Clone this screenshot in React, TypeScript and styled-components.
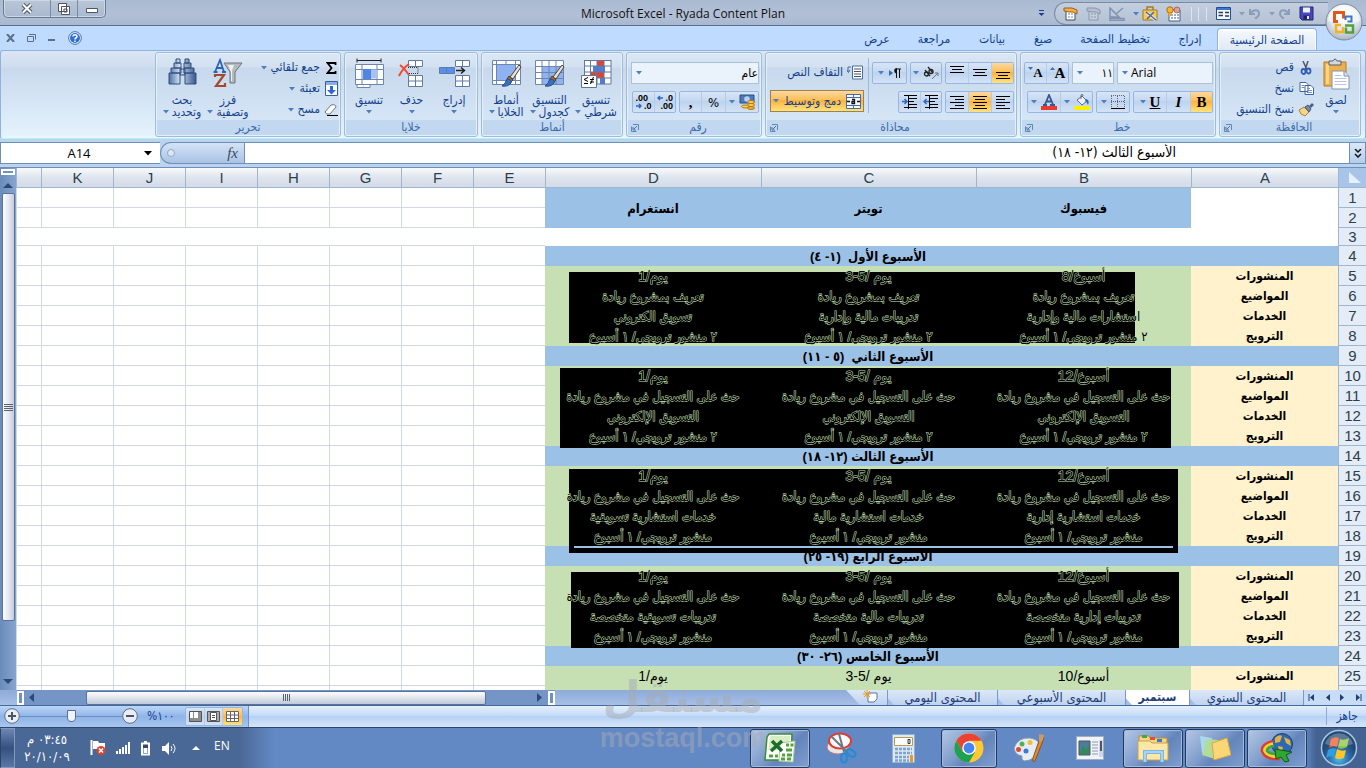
import React from "react";
import styled, { createGlobalStyle, css } from "styled-components";

const GlobalStyle = createGlobalStyle`
  * { box-sizing: border-box; }
  html, body { margin: 0; padding: 0; height: 100%; }
  body { overflow: hidden; background: #bfdbff; font-family: "Liberation Sans", "DejaVu Sans Condensed", "DejaVu Sans", sans-serif; }
  button, input, select { font: inherit; color: inherit; margin: 0; padding: 0; border: 0; background: none; border-radius: 0; }
  svg { display: block; flex: none; direction: ltr; }
`;

const uiFont = css`
  font-family: "DejaVu Sans Condensed", "DejaVu Sans", sans-serif;
  font-size: 11px;
  line-height: 13px;
`;

/* ---------- Window frame ---------- */

const Window = styled.div`
  position: relative;
  display: flex;
  flex-direction: column;
  height: 100vh;
  min-height: 480px;
  overflow: hidden;
  ${uiFont}
  color: #15428b;
`;

const TitleBar = styled.header`
  position: relative;
  flex: none;
  display: flex;
  align-items: flex-start;
  height: 26px;
  padding: 0 38px 0 3px;
  background: linear-gradient(#a9bbd2, #b2c0d6 60%, #a8b8d0);
  border-bottom: 1px solid #5d7183;
`;

const QuickAccess = styled.div`
  display: flex;
  align-items: center;
  gap: 8px;
  height: 23px;
  margin-top: 2px;
  padding: 0 14px 0 8px;
  border: 1px solid #7c8ba2;
  border-inline-start: 0;
  border-radius: 12px 0 0 12px;
  background: linear-gradient(#c3cfdf, #b4c2d5);
`;

const PlainButton = styled.button`
  display: flex;
  align-items: center;
  justify-content: center;
  gap: 3px;
  cursor: default;
`;

const Title = styled.h1`
  position: absolute;
  inset: 0;
  margin: 0;
  text-align: center;
  font: 12px/27px "Open Sans", "Noto Sans", sans-serif;
  color: #111;
  pointer-events: none;
`;

const Spacer = styled.div`
  flex: 1;
`;

const WindowButtons = styled.div`
  display: flex;
  height: 18px;
  direction: ltr;
  border: 1px solid #6b7a90;
  border-top: 0;
  border-radius: 0 0 5px 5px;
  background: linear-gradient(#b9c6d8, #a9b9cf);
  box-shadow: inset 0 0 0 1px #cdd8e6;
`;

const WindowButton = styled(PlainButton)<{ $w: number }>`
  width: ${(p) => p.$w}px;
  border-right: 1px solid #7c8ba2;
  &:last-child { border-right: 0; }
`;

const OfficeButton = styled.button`
  position: absolute;
  top: 3px;
  right: 3px;
  z-index: 3;
  width: 38px;
  height: 38px;
`;

/* ---------- Ribbon tabs ---------- */

const TabRow = styled.nav`
  flex: none;
  display: flex;
  align-items: flex-end;
  height: 24px;
  padding: 0 49px 0 6px;
  background: #bfdbff;
`;

const Tab = styled.button<{ $active?: boolean; $w: number }>`
  width: ${(p) => p.$w}px;
  height: 22px;
  font-size: 12px;
  line-height: 20px;
  color: #15428b;
  ${(p) =>
    p.$active &&
    css`
      border: 1px solid #8db2e3;
      border-bottom: 0;
      border-radius: 4px 4px 0 0;
      background: linear-gradient(#f5f9fe, #dfe9f5);
      box-shadow: inset 0 1px 0 1px #fff;
    `}
`;

const DocumentButtons = styled.div`
  display: flex;
  align-items: center;
  gap: 12px;
  height: 25px;
`;

/* ---------- Ribbon ---------- */

const Ribbon = styled.section`
  flex: none;
  display: flex;
  gap: 3px;
  height: 89px;
  padding: 1px 4px 0;
  border: 1px solid #8db2e3;
  border-bottom-color: #b4f0f0;
  border-radius: 3px;
  background: linear-gradient(#dbe6f4 0, #cfddee 16px, #c9d9ed 17px, #e3f2fc 84px, #e8fbff 100%);
  overflow: hidden;
`;

const GroupBox = styled.fieldset<{ $w: number }>`
  flex: none;
  width: ${(p) => p.$w}px;
  min-width: 0;
  height: 85px;
  margin: 0;
  padding: 0;
  border: 1px solid #9fbbdc;
  border-radius: 3px;
  background: linear-gradient(#dce7f4 0, #d2e0f0 14px, #c8d9ed 15px, #d9e9f9 100%);
  box-shadow: inset 0 0 0 1px #e6f0fa;
`;

const GroupBody = styled.div`
  display: flex;
  justify-content: space-between;
  height: 67px;
  padding: 4px 2px 0 3px;
`;

const GroupFoot = styled.div`
  display: flex;
  align-items: center;
  height: 15px;
  margin: 0 1px 1px;
  padding: 0 3px;
  background: #c1d8f0;
  color: #3e6aaa;
  font-size: 12px;
`;

const GroupName = styled.span`
  flex: 1;
  text-align: center;
`;

const BigButton = styled.button<{ $w?: number }>`
  display: flex;
  flex-direction: column;
  align-items: center;
  flex: none;
  width: ${(p) => p.$w ?? 44}px;
  padding-top: 1px;
  color: #15428b;
`;

const BigIcon = styled.span`
  display: block;
  height: 32px;
`;

const BigLabel = styled.span`
  display: flex;
  flex-direction: column;
  align-items: center;
  margin-top: 4px;
  font-size: 12px;
  line-height: 12px;
  white-space: nowrap;
`;

const LabelLine = styled.span`
  display: flex;
  align-items: center;
  gap: 3px;
  min-height: 12px;
`;

const SmallColumn = styled.div`
  display: flex;
  flex-direction: column;
  align-items: flex-start;
`;

const SmallButton = styled.button`
  display: flex;
  align-items: center;
  gap: 4px;
  height: 21px;
  font-size: 12px;
  color: #15428b;
  white-space: nowrap;
`;

const SmallIcon = styled.span<{ $w: number }>`
  display: flex;
  justify-content: center;
  width: ${(p) => p.$w}px;
`;

const ControlRows = styled.div<{ $w?: number }>`
  flex: ${(p) => (p.$w ? "none" : 1)};
  width: ${(p) => (p.$w ? `${p.$w}px` : "auto")};
  display: flex;
  flex-direction: column;
  gap: 7px;
  padding-top: 5px;
`;

const ControlRow = styled.div`
  display: flex;
  gap: 3px;
  justify-content: flex-start;
`;

const ToolSet = styled.div`
  display: flex;
  height: 22px;
  border: 1px solid #96b6e4;
  border-radius: 2px;
  background: linear-gradient(#d8e5f6, #c4d8f0 45%, #bcd2ee 46%, #d3e3f6);
`;

const Tool = styled.button<{ $w: number; $on?: boolean; $tight?: boolean }>`
  display: flex;
  align-items: center;
  justify-content: center;
  gap: ${(p) => (p.$tight ? 0 : 4)}px;
  width: ${(p) => p.$w}px;
  height: 20px;
  color: #000;
  font-size: 13px;
  border-inline-end: 1px solid #b5cbe9;
  &:last-child { border-inline-end: 0; }
  ${(p) => p.$on && css`background: linear-gradient(#fbd9a0, #fdbf56 45%, #fdb13f 46%, #fde37c);`}
`;

const MergeButton = styled(SmallButton)`
  justify-content: space-between;
  gap: 2px;
  width: 94px;
  height: 22px;
  padding: 0 2px;
  border: 1px solid #a08050;
  background: linear-gradient(#fbd9a0, #fdbf56 45%, #fdb13f 46%, #fde37c);
`;

const Divider = styled.div`
  width: 1px;
  height: 55px;
  margin-top: 1px;
  margin-inline-end: 4px;
  background: #9ab9df;
`;

const PickerBox = styled.div<{ $w: number }>`
  position: relative;
  width: ${(p) => p.$w}px;
  height: 22px;
`;

const PickerArrow = styled.span`
  position: absolute;
  left: 5px;
  top: 9px;
  pointer-events: none;
`;

const Picker = styled.select<{ $ltr?: boolean }>`
  appearance: none;
  width: 100%;
  height: 22px;
  border: 1px solid #abc1de;
  background: #eaf2fb;
  color: #000;
  font: 12px/16px "Open Sans", "DejaVu Sans Condensed", "DejaVu Sans", sans-serif;
  padding: 0 0 0 13px;
  direction: ${(p) => (p.$ltr ? "ltr" : "rtl")};
`;

/* ---------- Formula bar ---------- */

const FormulaBar = styled.div`
  flex: none;
  display: flex;
  height: 28px;
  padding: 3px 0;
  background: #bcd3ef;
`;

const ExpandButton = styled(PlainButton)`
  width: 17px;
  border: 1px solid #6d8fb8;
  background: linear-gradient(#dbe8f8, #b4cdec);
`;

const FormulaInput = styled.input`
  flex: 1;
  min-width: 0;
  padding: 0 173px 2px 8px;
  border: 1px solid #6d8fb8;
  border-inline-start: 0;
  background: #fff;
  color: #000;
  font-size: 14px;
`;

const FxArea = styled.div`
  display: flex;
  align-items: center;
  justify-content: space-between;
  width: 84px;
  padding: 0 6px 0 6px;
  border-block: 1px solid #6d8fb8;
  border-left: 1px solid #6d8fb8;
  border-radius: 11px 0 0 11px;
  background: linear-gradient(#d4e3f6, #a9c3e6);
`;

const FxButton = styled.button`
  font: italic 15px/18px "Liberation Serif", serif;
  color: #3a4a5c;
`;

const NameBox = styled.div`
  display: flex;
  align-items: center;
  width: 160px;
  padding: 0 7px 0 13px;
  border-block: 1px solid #6d8fb8;
  border-left: 1px solid #6d8fb8;
  background: #fff;
`;

const NameInput = styled.input`
  flex: 1;
  min-width: 0;
  text-align: center;
  direction: ltr;
  color: #000;
  font: 13px "Open Sans", "Noto Sans", sans-serif;
`;

/* ---------- Sheet ---------- */

const SheetArea = styled.main`
  flex: 1;
  display: flex;
  min-height: 0;
  background: #fff;
  border-top: 1px solid #6d8fb8;
`;

const SheetView = styled.div`
  position: relative;
  flex: 1;
  min-width: 0;
  overflow: hidden;
`;

const Grid = styled.table`
  width: 100%;
  table-layout: fixed;
  border-collapse: separate;
  border-spacing: 0;
  font: 15px/17px "Liberation Sans", "DejaVu Sans Condensed", "DejaVu Sans", sans-serif;
  color: #000;
`;

const Row = styled.tr<{ $h: number }>`
  height: ${(p) => p.$h}px;
`;

const ColumnHead = styled.th`
  height: 20px;
  padding: 0;
  font-weight: 400;
  color: #2d3f4b;
  border-left: 1px solid #9eb6ce;
  border-bottom: 1px solid #9eb6ce;
  background: linear-gradient(#f8fafc, #dfe5ee 50%, #d3dbe9);
`;

const CornerHead = styled.th`
  padding: 2px;
  border-left: 1px solid #9eb6ce;
  border-bottom: 1px solid #9eb6ce;
  background: #a9c4e9;
`;

const RowHead = styled.th`
  padding: 0;
  overflow: hidden;
  font-weight: 400;
  color: #2d3f4b;
  border-left: 1px solid #9eb6ce;
  border-bottom: 1px solid #9eb6ce;
  background: #e4ecf7;
`;

const fills = {
  none: "#fff",
  blue: "#9bc2e6",
  green: "#c6e0b4",
  yellow: "#fff2cc",
};

const Cell = styled.td<{ $fill: keyof typeof fills; $line?: boolean; $bold?: boolean; $size?: number }>`
  padding: 0;
  overflow: hidden;
  text-align: center;
  white-space: nowrap;
  font-size: ${(p) => p.$size ?? 13}px;
  font-weight: ${(p) => (p.$bold ? 700 : 400)};
  background: ${(p) => fills[p.$fill]};
  border: 0 solid #d0d7e5;
  ${(p) => p.$line && css`border-width: 0 0 1px 1px;`}
`;

/* Text sits above the blocks; its halo has the colour of the cell fill. */
const CellText = styled.span`
  position: relative;
  z-index: 1;
  -webkit-text-stroke: 1px #c6e0b4;
  paint-order: stroke fill;
`;

const Block = styled.div<{ $right: number; $top: number; $w: number; $h: number }>`
  position: absolute;
  right: ${(p) => p.$right}px;
  top: ${(p) => p.$top}px;
  display: flex;
  flex-direction: column;
  justify-content: flex-end;
  width: ${(p) => p.$w}px;
  height: ${(p) => p.$h}px;
  padding: 5px;
  background: #000;
`;

const BlockLine = styled.div`
  height: 2px;
  background: #9bc2e6;
`;

const VScroll = styled.div`
  flex: none;
  display: flex;
  flex-direction: column;
  align-items: center;
  width: 16px;
  padding: 1px 1px 5px;
  background: linear-gradient(90deg, #6a8bbb, #86a4cf);
`;

const SplitBox = styled.div<{ $vertical?: boolean }>`
  flex: none;
  width: ${(p) => (p.$vertical ? 7 : 14)}px;
  height: ${(p) => (p.$vertical ? 14 : 6)}px;
  border: 2px solid #fff;
  background: #7190bf;
`;

const VThumb = styled.div`
  flex: 1;
  display: flex;
  align-items: center;
  justify-content: center;
  width: 13px;
  margin-bottom: 58px;
  border: 1px solid #5a7399;
  border-radius: 2px;
  background: linear-gradient(90deg, #fdfdfe, #dfe5ee 60%, #c2ccdb);
`;

/* ---------- Sheet tabs, status bar ---------- */

const BottomBar = styled.div`
  flex: none;
  display: flex;
  height: 16px;
  background: linear-gradient(#8eabd9, #a5bfe6);
  border-bottom: 1px solid #44699c;
`;

const TabNav = styled.div`
  display: flex;
  align-items: center;
  justify-content: space-around;
  width: 62px;
  background: #c9dcf6;
`;

const SheetTab = styled.button<{ $w: number; $active?: boolean }>`
  width: ${(p) => p.$w}px;
  height: 15px;
  margin-left: -8px;
  padding: 0 0 1px 8px;
  clip-path: polygon(0 0, 100% 0, 100% 100%, 14px 100%);
  background: ${(p) => (p.$active ? "#fff" : "linear-gradient(#dce8f8, #bed3f0)")};
  font-weight: ${(p) => (p.$active ? 700 : 400)};
  font-size: ${(p) => (p.$active ? 12 : 13)}px;
  line-height: 13px;
  color: #1f3e75;
  border-right: 1px solid #7b98c4;
  white-space: nowrap;
`;

const NewSheetTab = styled(SheetTab)`
  display: flex;
  justify-content: center;
`;

const HScroll = styled.div`
  display: flex;
  align-items: center;
  width: 538px;
  padding: 1px 0;
  margin-left: 17px;
  background: #7595c6;
`;

const HThumb = styled.div`
  flex: 1;
  display: flex;
  align-items: center;
  justify-content: center;
  height: 14px;
  margin: 0 46px;
  border: 1px solid #5a7399;
  border-radius: 2px;
  background: linear-gradient(#fdfdfe, #d9dfe9 60%, #bcc8d9);
`;

const StatusBar = styled.footer`
  flex: none;
  display: flex;
  align-items: center;
  height: 22px;
  padding: 0 0 1px 3px;
  background: linear-gradient(#e4effd, #c7dcf8 45%, #b3d0f5 46%, #d5e5fa);
  border-bottom: 1px solid #2f4666;
  color: #15428b;
`;

const StatusText = styled.span`
  width: 40px;
  padding-right: 8px;
  border-left: 1px solid #8caad4;
  font-size: 12px;
  line-height: 18px;
`;

const ZoomArea = styled.div`
  display: flex;
  align-items: center;
  direction: ltr;
  height: 21px;
  background: linear-gradient(#bdd6f8, #8fb4e8 50%, #a7c6f0);
  margin-left: -3px;
  padding-left: 4px;
  border-right: 1px solid #6f93c6;
`;

const ZoomSlider = styled.input`
  appearance: none;
  width: 102px;
  height: 16px;
  background: linear-gradient(#6d8fbf, #6d8fbf) center / 100% 1px no-repeat;
  &::-webkit-slider-thumb {
    appearance: none;
    width: 9px;
    height: 12px;
    border: 1px solid #5d6f88;
    border-radius: 1px 1px 5px 5px;
    background: #eef4fb;
  }
`;

const ZoomLabel = styled.label`
  margin: 0 8px 0 9px;
  width: 30px;
  font-size: 12px;
  white-space: nowrap;
`;

const ViewSet = styled(ToolSet)`
  height: 19px;
  margin-right: 5px;
`;

const ViewTool = styled(Tool)`
  height: 17px;
`;

/* ---------- Taskbar ---------- */

const Taskbar = styled.div`
  flex: none;
  display: flex;
  align-items: center;
  height: 40px;
  padding-right: 6px;
  background: linear-gradient(90deg, #4a6896 0, #4a6896 240px, #6389c5 275px, #6389c5 calc(100% - 62px), #456392 calc(100% - 50px));
`;

const TaskItem = styled.button<{ $w: number; $open?: boolean; $gap?: number }>`
  display: flex;
  align-items: center;
  justify-content: center;
  width: ${(p) => p.$w}px;
  height: 39px;
  margin-left: ${(p) => p.$gap ?? 2}px;
  ${(p) =>
    p.$open &&
    css`
      border: 1px solid #23395e;
      border-radius: 3px;
      background: linear-gradient(135deg, #b5c8e4, #7d9bcb 45%, #6485bb 60%, #7f9fd0);
      box-shadow: inset 0 0 0 1px #a3b9dc;
    `}
`;

const Tray = styled.div`
  display: flex;
  align-items: center;
  direction: ltr;
  height: 40px;
  color: #fff;
`;

const ShowDesktop = styled.button`
  width: 15px;
  height: 40px;
  border: 1px solid #8199c0;
  border-left-color: #2d4368;
  background: linear-gradient(#6d87b3, #35507f 50%, #5877a8);
`;

const Clock = styled.time`
  width: 58px;
  margin-left: 3px;
  text-align: center;
  direction: rtl;
  font-size: 13px;
  line-height: 17px;
`;

const TrayIcons = styled.div`
  display: flex;
  align-items: center;
  gap: 9px;
  margin-left: 14px;
`;

const Language = styled.span`
  margin-left: 10px;
  padding-bottom: 4px;
  font: 12px/16px "Open Sans", "Noto Sans", sans-serif;
`;

const Watermark = styled.div`
  position: absolute;
  left: 599px;
  bottom: 15px;
  z-index: 5;
  display: flex;
  flex-direction: column;
  align-items: center;
  width: 168px;
  color: rgba(165, 170, 180, 0.5);
  font: 700 27px/30px "Liberation Sans", sans-serif;
  pointer-events: none;
`;

const WatermarkName = styled.div`
  font: 700 44px/52px "DejaVu Sans", sans-serif;
`;

/* ---------- Icons ---------- */

const Caret = ({ color = "#4f7fc0" }: { color?: string }) => (
  <svg width="6" height="4"><path d="M0 0h6L3 3.500z" fill={color} /></svg>
);

const Launcher = () => (
  <svg width="8" height="8" viewBox="0 0 8 8"><path d="M2 .5h5.500v5.500" fill="none" stroke="#6387b5" /><path d="M.5 2.500v5h5" fill="none" stroke="#6387b5" /><path d="M6 2 3 5M2 3v3h3" stroke="#4b70a5" fill="none" /></svg>
);

const OfficeLogo = () => (
  <svg width="38" height="38" viewBox="0 0 38 38">
    <defs><radialGradient id="orb" cx=".5" cy=".3" r=".7"><stop offset="0" stopColor="#fff" /><stop offset=".6" stopColor="#dfe5ec" /><stop offset="1" stopColor="#aab5c4" /></radialGradient></defs>
    <circle cx="19" cy="19" r="18" fill="url(#orb)" stroke="#7d8a9c" />
    <path d="M3 18a16 16 0 0 1 32 0q-16 6-32 0z" fill="#fff" opacity=".5" />
    <g fill="none">
      <path d="M13 18.500H9.500v-9h9v6" stroke="#dd5a1b" strokeWidth="3" />
      <path d="M20.500 17v-3.500h6v5h-4" stroke="#3d76c9" strokeWidth="2" />
      <path d="M18 24v5h-7v-7h5" stroke="#f4b223" strokeWidth="2.500" />
      <path d="M20 22.500h8v7h-7v-5" stroke="#53a13c" strokeWidth="2.500" />
    </g>
  </svg>
);

const SaveIcon = () => (
  <svg width="15" height="15" viewBox="0 0 15 15"><path d="M1 1h13v13H3l-2-2z" fill="#4747b8" stroke="#26266e" /><path d="M4 1.500h7v5H4z" fill="#eef0fb" /><path d="M4.500 9.500h6v4h-6z" fill="#23235c" /><path d="M8 10h2v3H8z" fill="#dfe3f5" /></svg>
);
const UndoIcon = ({ flip }: { flip?: boolean }) => (
  <svg width="13" height="12" viewBox="0 0 13 12"><g transform={flip ? "translate(13 0) scale(-1 1)" : undefined}><path d="M11 1v5H6M10.500 5.500C8 1 2 1 2 5.500c0 3 2 4 4 5" fill="none" stroke="#8c9db8" strokeWidth="2" /></g></svg>
);
const FormIcon = () => (
  <svg width="15" height="13" viewBox="0 0 15 13"><path d="M.5.500h14v12H.5z" fill="#f4f8fd" stroke="#1d4d9c" /><path d="M1 1h13v2H1z" fill="#3c77ce" /><path d="M2.500 5.500H7M2.500 8.500H7M9 5.500h4M9 9h4" stroke="#2c3b57" strokeWidth="1.500" /></svg>
);
const TwoPeople = () => (
  <svg width="16" height="16" viewBox="0 0 16 16"><path d="M3 4h11v11H3z" fill="#fff" stroke="#44608d" /><path d="M5 9h8M5 12h8" stroke="#7b93ba" strokeWidth="1.500" strokeDasharray="2 1" /><circle cx="4" cy="4" r="3.200" fill="#f2b636" stroke="#b36b10" /><path d="M2 7h4l-1 3H3z" fill="#f2a426" /><circle cx="11" cy="4" r="3" fill="#d9a09a" stroke="#8c4f4b" strokeWidth=".7" /></svg>
);
const ToolsIcon = () => (
  <svg width="16" height="15" viewBox="0 0 16 15"><path d="M1 4h14v10H1z" fill="#f6c958" stroke="#a67b20" /><path d="M5 4V1h6v3" fill="none" stroke="#a67b20" strokeWidth="1.500" /><path d="m5 7 9 7" stroke="#e8edf5" strokeWidth="3" /><path d="m5 13 7-7M4 6l10 8" stroke="#466a9f" strokeWidth="1.500" /></svg>
);
const DesignIcon = () => (
  <svg width="16" height="14" viewBox="0 0 16 14"><path d="M1 1v9h9zM1 11.500h14v2H1zM7 7l7-6" fill="none" stroke="#8193ae" strokeWidth="1.500" /></svg>
);
const PropsIcon = ({ dim }: { dim?: boolean }) => (
  <svg width="15" height="15" viewBox="0 0 15 15"><path d="M3 4h9v10H3z" fill={dim ? "#c6cfdc" : "#fff"} stroke={dim ? "#8896ac" : "#404c60"} /><path d="M5 8h6M5 11h6" stroke={dim ? "#8896ac" : "#6682ad"} strokeDasharray="2 1" /><path d="M1 2h8l5 2v4l-4-2H6L1 5z" fill={dim ? "#b4bfd0" : "#efb04c"} stroke={dim ? "#8896ac" : "#9b6118"} /></svg>
);
const HelpIcon = () => (
  <svg width="14" height="14" viewBox="0 0 14 14"><circle cx="7" cy="7" r="6.300" fill="#fff" stroke="#3b69b0" /><circle cx="7" cy="7" r="5" fill="#2f6fd0" /><path d="M5 5.500c0-2.500 4-2.500 4 0C9 7 7 6.500 7 8.500M7 9.500v1.500" stroke="#fff" strokeWidth="1.500" fill="none" /></svg>
);

const PasteIcon = () => (
  <svg width="28" height="32" viewBox="0 0 28 32"><path d="M2 4h22v24H2z" fill="#eeb04a" stroke="#b57b22" /><path d="M4 6h3v20H4z" fill="#f9d48b" /><path d="M7 3h4q2-4 4 0h4v4H7z" fill="#d3d7de" stroke="#555f70" /><path d="M10 13h12l5 5v13H10z" fill="#fff" stroke="#8092b3" /><path d="M22 13v5h5" fill="#dce5f2" stroke="#8092b3" /><path d="M12.500 17.500h7M12.500 20.500h12M12.500 23.500h12M12.500 26.500h12" stroke="#b6c6e0" /></svg>
);
const CutIcon = () => (
  <svg width="12" height="14" viewBox="0 0 12 14"><path d="m3 0 4 9M8 0 5 9" stroke="#556" strokeWidth="1.500" /><ellipse cx="3.500" cy="10.500" rx="2" ry="2.500" fill="none" stroke="#2f5fb4" strokeWidth="1.800" /><ellipse cx="8.500" cy="10" rx="2" ry="2.500" fill="none" stroke="#2f5fb4" strokeWidth="1.800" /></svg>
);
const CopyIcon = () => (
  <svg width="15" height="13" viewBox="0 0 15 13"><path d="M1 .5h6l2 2v7H1zM6 3.500h6l2.500 2.500v6.500H6z" fill="#fff" stroke="#3f62a0" /><path d="M2.500 3.500h3M2.500 5.500h3M8 6.500h3M8 8.500h5M8 10.500h5" stroke="#6e92cb" /></svg>
);
const PainterIcon = () => (
  <svg width="16" height="14" viewBox="0 0 16 14"><path d="m1 7 5-3 5 5-4 4q-5-1-6-6z" fill="#f2d48a" stroke="#a98235" /><path d="m7 4 3-2 3 4-2 3z" fill="#7b8aa4" stroke="#495a78" /><path d="m11 3 3-3 2 2-3 3z" fill="#4e5f7e" /></svg>
);

const Glyph = styled.span<{ $italic?: boolean; $under?: boolean; $small?: boolean }>`
  font: 700 15px/18px "Liberation Serif", serif;
  ${(p) => p.$small && css`font-size: 13px;`}
  font-style: ${(p) => (p.$italic ? "italic" : "normal")};
  text-decoration: ${(p) => (p.$under ? "underline" : "none")};
`;
const SizeMark = ({ up }: { up?: boolean }) => (
  <svg width="5" height="12"><path d={up ? "M0 3h5L2.500 0z" : "M0 0h5L2.500 3z"} fill="#3c6fbc" /></svg>
);
const BorderIcon = () => (
  <svg width="14" height="14" viewBox="0 0 14 14" shapeRendering="crispEdges"><path d="M.5 1v12M6.500 1v12M13.500 1v12M0 .5h14M0 6.500h14" stroke="#667" strokeDasharray="1 1" /><path d="M0 13.500h14" stroke="#000" strokeWidth="2" /></svg>
);
const FillIcon = () => (
  <svg width="16" height="16" viewBox="0 0 16 16"><path d="m3 6 5-4 5 5-5 4z" fill="#eef2f8" stroke="#5b6b85" /><path d="M7 5V1q2-2 2 1" fill="none" stroke="#5b6b85" /><path d="M12 5q4 1 2 6-1-3-3-4z" fill="#2d67b9" /><path d="M0 12h16v4H0z" fill="#ffef00" /></svg>
);
const FontColorIcon = () => (
  <svg width="16" height="16" viewBox="0 0 16 16"><path d="M2 11h4M9 11h5M4 10.500 8 1l4 9.500M5.500 7.500h5" stroke="#36598f" strokeWidth="1.800" fill="none" /><path d="M0 12h16v4H0z" fill="#ea3b31" /></svg>
);

const Lines = ({ rows }: { rows: Array<[number, number, number]> }) => (
  <svg width="14" height="14" viewBox="0 0 14 14" shapeRendering="crispEdges">
    {rows.map(([x, y, w]) => <path key={y} d={`M${x} ${y}.5h${w}`} stroke="#000" />)}
  </svg>
);
const WrapIcon = () => (
  <svg width="17" height="15" viewBox="0 0 17 15"><path d="M5.500 1h10v13h-10z" fill="#fff" stroke="#456ca6" /><path d="M7 4h7M7 6.500h7M7 9h7M7 11.500h7" stroke="#456" /><path d="M4 2H1v5M0 5l1.500 2.500L3 5" fill="none" stroke="#456ca6" /></svg>
);
const MergeIcon = () => (
  <svg width="15" height="15" viewBox="0 0 15 15"><path d="M.5.500h14v14H.5zM.5 3.500h14M.5 11.500h14M7.500 0v3.500M7.500 11.500V15" fill="#f4f8fe" stroke="#446aa3" /><path d="M1 7.500h3M11 7.500h3M6 5.500h2.500v4H6v-2h2.500" fill="none" stroke="#111" strokeWidth="1.300" /></svg>
);
const OrientIcon = () => (
  <svg width="16" height="14" viewBox="0 0 16 14"><g fill="none" stroke="#222" strokeWidth="1.300"><path d="m2 4 5 6" /><circle cx="3.500" cy="8" r="2" /><circle cx="8" cy="5.500" r="2" /><path d="m5 1 5 6" /></g><path d="m9 13 6-6M12 7h3v3" stroke="#777" fill="none" /></svg>
);
const DirectionIcon = () => (
  <svg width="13" height="11" viewBox="0 0 13 11"><path d="M1 2v6l4-3z" fill="#3668b8" /><path d="M8.500 10V1M11.500 10V1M13 1H9" stroke="#111" fill="none" /><path d="M9 0a2.500 2.500 0 0 0 0 5.500z" fill="#111" /></svg>
);
const IndentIcon = ({ out }: { out?: boolean }) => (
  <svg width="16" height="14" viewBox="0 0 16 14"><g shapeRendering="crispEdges" stroke="#000"><path d="M2 .5h4M7 .5h8M7 3.500h8M7 6.500h5M7 9.500h8M2 12.500h4M7 12.500h8M6.500 0v14" /></g><path d={out ? "M0 6.500h5M2.500 4l2.500 2.500L2.500 9" : "M6 6.500H1M3.500 4 1 6.500 3.500 9"} stroke="#2f66c1" strokeWidth="1.500" fill="none" /></svg>
);
const MoneyIcon = () => (
  <svg width="17" height="16" viewBox="0 0 17 16"><path d="M1 1h14v8H1z" fill="#4d79bb" stroke="#2b4f88" /><circle cx="8" cy="5" r="2.800" fill="#bcd1ef" /><ellipse cx="12" cy="8" rx="3.500" ry="1.500" fill="#fbcf53" stroke="#b57b13" /><ellipse cx="12" cy="11" rx="3.500" ry="1.500" fill="#fbcf53" stroke="#b57b13" /><ellipse cx="6" cy="12.500" rx="3.500" ry="1.500" fill="#fbcf53" stroke="#b57b13" /><ellipse cx="12" cy="14" rx="3.500" ry="1.500" fill="#f2a93a" stroke="#b57b13" /></svg>
);
const DecimalBox = styled.span`
  display: flex;
  flex-direction: column;
  direction: ltr;
  font: 700 9px/8px "Liberation Sans", sans-serif;
`;
const DecimalLine = styled.span`
  display: flex;
  align-items: center;
  justify-content: space-between;
  width: 16px;
`;
const Arrow = ({ right }: { right?: boolean }) => (
  <svg width="6" height="6"><path d={right ? "M0 3h5M3 1l2 2-2 2" : "M6 3H1M3 1 1 3l2 2"} stroke="#2f66c1" strokeWidth="1.500" fill="none" /></svg>
);

const CondIcon = () => (
  <svg width="31" height="30" viewBox="0 0 31 30"><path d="M3 2h27v24H3z" fill="#fff" /><path d="M16 2h7v6h-7zM10 14h13v6H10z" fill="#e8402a" /><path d="M12 8h12v6H12zM19 20h5v6h-5z" fill="#4e7fd6" /><path d="M3.500 2v24M9.500 2v24M16 2v24M23 2v24M30 2v24M3 2.500h27M3 8h27M3 14h27M3 20h27M3 26h27" stroke="#60789f" fill="none" /><path d="M.5 17.500h15v12H.5z" fill="#fff" stroke="#5e7595" /><path d="M7 19.500 3 21.500l4 2M3 25.500h4M9 21.500h4M9 24h4M12.500 19l-3 7" stroke="#000" fill="none" /></svg>
);
const TableBrush = ({ full }: { full?: boolean }) => (
  <svg width="31" height="30" viewBox="0 0 31 30"><path d="M1 2h28v24H1z" fill="#fff" /><path d={full ? "M5 6h20v16H5z" : "M8 8h21v18H8z"} fill="#8fb2f2" /><path d={full ? "M1.500 2.500h28v24h-28zM5.500 2v24M24.500 2v24M1 6.500h28M1 22.500h28M15 2v4M15 22v4" : "M1.500 2.500h28v24h-28zM8 2v24M15 2v24M22 2v24M1 8.500h28M1 14.500h28M1 20.500h28"} stroke="#6c86ad" fill="none" /><path d="m28 7 2 2-8 12-3-2z" fill="#e7e1d4" stroke="#4b4038" /><path d="m18 18 4 4-2 2-4-3z" fill="#a86c33" stroke="#5e4025" /><path d="M16 21q5 0 4 4-3 4-9 3 4-3 5-7z" fill="#3a72ba" stroke="#254f86" /></svg>
);
const InsertIcon = () => (
  <svg width="31" height="30" viewBox="0 0 31 30" fill="#fff" stroke="#5d7ba8"><path d="M16.500 2.500h14v6h-14zM23.500 2.500v6M16.500 17.500h14v11h-14zM23.500 17.500v11M16.500 23h14" /><path d="M.5 9.500h15v6H.5zM7.500 9.500v6" fill="#5b8ee8" /><path d="M17 12.500h8M22 9.500l3.500 3-3.500 3" fill="none" stroke="#222" strokeWidth="1.500" /></svg>
);
const DeleteIcon = () => (
  <svg width="27" height="30" viewBox="0 0 27 30" fill="#fff" stroke="#5d7ba8"><path d="M10.500 2.500h14v6h-14zM17.500 2.500v6M10.500 17.500h14v11h-14zM17.500 17.500v11M10.500 23h14" /><path d="M10 9.500h10v6H10" fill="none" stroke="#333" strokeDasharray="1 1" /><path d="M2 7q4 3 9 10M11 6Q5 10 1 18" stroke="#ee4b2d" strokeWidth="2" fill="none" /></svg>
);
const FormatIcon = () => (
  <svg width="31" height="31" viewBox="0 0 31 31"><path d="M3 2.500h24M3 .5v4M27 .5v4M8 2.500h14" stroke="#222" fill="none" /><path d="M1 6h28v20H1zM3 27h6v3H3zM10 27h6v3h-6z" fill="#fff" /><path d="M1.500 6.500h28v20h-28zM8 6v20M23 6v20M1 11.500h28M1 21.500h28M3 26.500v3h13v-3" stroke="#6c86ad" fill="none" /><path d="M9 11h8v10H9z" fill="#4e86e6" /><path d="M17 11.500h6v9h-6z" fill="#a7c2f0" /></svg>
);
const SortIcon = () => (
  <svg width="31" height="30" viewBox="0 0 31 30"><path d="M2 14 7 2l4 12M4 10h6M.5 14h4M9 14h4" stroke="#2b63b5" strokeWidth="1.800" fill="none" /><path d="M2 19v-2h9L3 28h9v-3" stroke="#a34a2c" strokeWidth="2.200" fill="none" /><path d="M11 5h18l-7 9v11h-5V14z" fill="#b5babf" stroke="#6d747c" /><path d="M15 7h6l-2 6v10h-1V14z" fill="#eceef0" /></svg>
);
const FindIcon = () => (
  <svg width="29" height="30" viewBox="0 0 29 30"><defs><linearGradient id="bino" x2="1"><stop offset="0" stopColor="#4d6fa6" /><stop offset=".4" stopColor="#d6e1f1" /><stop offset="1" stopColor="#35588f" /></linearGradient></defs><g fill="url(#bino)" stroke="#304e7f"><path d="M8 1h4v4H8zM17 1h4v4h-4zM6 5h7v5H6zM16 5h7v5h-7zM3 10h10v5H3zM16 10h10v5H16zM1 15h11v11H1zM17 15h11v11H17zM12 11h5v6h-5z" /></g></svg>
);
const SumIcon = () => (
  <svg width="11" height="12" viewBox="0 0 11 12"><path d="M9.500 3V1H1.500l4 5-4 5h8V9" fill="none" stroke="#000" strokeWidth="1.800" /></svg>
);
const FillDownIcon = () => (
  <svg width="13" height="15" viewBox="0 0 13 15"><path d="M.5.500h12v14H.5z" fill="#fff" stroke="#39609d" /><path d="M1 1h11v3H1z" fill="#86aee9" /><path d="M5 5h3v4h3l-4.500 4.500L2 9h3z" fill="#2c6ad0" /></svg>
);
const EraserIcon = () => (
  <svg width="14" height="12" viewBox="0 0 14 12"><path d="m1 8 6-7q5-1 5 2l-6 7q-4 1-5-2z" fill="#fdfdfe" stroke="#6a7689" /><path d="M3 11.500h11" stroke="#000" /></svg>
);

const NavIcon = ({ flip, end }: { flip?: boolean; end?: boolean }) => (
  <svg width="7" height="7" viewBox="0 0 7 7"><g transform={flip ? "translate(7 0) scale(-1 1)" : undefined}><path d="M1 0v7l4-3.500z" fill="#1f3e75" />{end && <path d="M6 0v7" stroke="#1f3e75" />}</g></svg>
);
const Grip = ({ turn }: { turn?: boolean }) => (
  <svg width="9" height="9" viewBox="0 0 9 9" shapeRendering="crispEdges"><path d={turn ? "M0 1.500h9M0 3.500h9M0 5.500h9M0 7.500h9" : "M1.500 1v7M3.500 1v7M5.500 1v7M7.500 1v7"} stroke="#5a6270" /></svg>
);
const ZoomIcon = ({ plus }: { plus?: boolean }) => (
  <svg width="16" height="16" viewBox="0 0 16 16"><circle cx="8" cy="8" r="7.300" fill="#e9edf3" stroke="#5f6f86" /><path d={plus ? "M4 8h8M8 4v8" : "M4 8h8"} stroke="#4a5668" strokeWidth="2" /></svg>
);

const StartOrb = () => (
  <svg width="38" height="38" viewBox="0 0 38 38"><defs><radialGradient id="start" cy=".8"><stop offset="0" stopColor="#49c0f0" /><stop offset=".6" stopColor="#2b6aa6" /><stop offset="1" stopColor="#244a78" /></radialGradient></defs><circle cx="19" cy="19" r="17.500" fill="url(#start)" stroke="#a5c4dd" strokeWidth="1.500" /><path d="M11 10q4-3 8-1l-2 9q-4-2-8 1z" fill="#ef5a28" /><path d="M20 10q4 2 9-1l-2 9q-5 3-9 1z" fill="#8bc63e" /><path d="M8 21q4-3 8-1l-2 8q-4-2-8 1z" fill="#2f9ee0" /><path d="M17 20q5 3 9 1l-2 8q-5 2-9 0z" fill="#fcc628" /><path d="M5 15a14.500 14.500 0 0 1 28 0q-14 5-28 0z" fill="#fff" opacity=".25" /></svg>
);
const GlobeIcon = () => (
  <svg width="34" height="30" viewBox="0 0 34 30"><circle cx="22" cy="11" r="10.500" fill="#2e67b4" stroke="#1c3f76" /><path d="M15 5q4-4 7-2l-2 6-5 1zM24 4l6 3 1 6-5-3zM18 13l5 1-1 4-3-1z" fill="#dfb443" /><path d="M13 8Q1 11 2 18q3 9 18 8" fill="none" stroke="#e23b2e" strokeWidth="2.500" /><path d="M13 10.500q-9 2-8.500 7.500 3 6 15 6" fill="none" stroke="#f5d327" strokeWidth="2.500" /><path d="M14 13q-7 1-7 5 3 3 11 3" fill="none" stroke="#3aa83c" strokeWidth="2.500" /><path d="m15 16 17 3-6 3 3 6-4 1-4-5-5 2z" fill="#2ea82e" stroke="#0d5c14" /></svg>
);
const NotesIcon = () => (
  <svg width="32" height="28" viewBox="0 0 32 28"><path d="m1 2 12 2 1 13-11 2z" fill="#a7d8ef" /><path d="m7 5 12 1-3 19-13-4z" fill="#b4dc99" /><path d="m13 9 15-5 4 17-17 5z" fill="#fbd677" stroke="#dba93d" /></svg>
);
const FolderIcon = () => (
  <svg width="32" height="30" viewBox="0 0 32 30"><path d="M2 3h10l1 2h17v20H2z" fill="#f3d681" stroke="#b98f36" /><path d="M5 2h5v3H5z" fill="#4ba348" /><path d="M13 4h5v3h-5z" fill="#df4f3c" /><path d="M20 6h5v3h-5z" fill="#3d7cc9" /><path d="M1 8h12l2 2h16v17H1z" fill="#fbe7a6" stroke="#c9a24c" /><path d="M8 29V19h17v10" fill="none" stroke="#7db8e4" strokeWidth="4" /><path d="M8 29V19h17v10" fill="none" stroke="#b8dcf4" strokeWidth="1.500" /></svg>
);
const ReaderIcon = () => (
  <svg width="28" height="24" viewBox="0 0 28 24"><path d="M.5.500h27v23H.5z" fill="#f0f4f9" stroke="#a2adbd" /><path d="M3 5h11v14H3z" fill="#497f9d" stroke="#555" /><path d="m4 17 3-7 3 4 3-5v9H4z" fill="#328a57" /><path d="M16 6h6M16 9h6M16 12h6M16 15h6M16 18h6" stroke="#8b98aa" /><path d="M23 4h4v17h-4z" fill="#cdd8e6" /><path d="M24 5h2v10h-2z" fill="#4b5868" /></svg>
);
const PaintIcon = () => (
  <svg width="33" height="30" viewBox="0 0 33 30"><path d="M2 15Q6 4 18 5q12 2 9 11-4 12-15 12-3-1-2-5Q3 22 2 15z" fill="#e6ecf4" stroke="#8898b1" /><circle cx="6.500" cy="16.500" r="2.500" fill="#d94a38" /><circle cx="10" cy="11" r="2.500" fill="#5bae4a" /><circle cx="18" cy="9.500" r="2.500" fill="#efc034" /><circle cx="14" cy="18" r="2.500" fill="#3f78ce" /><path d="m29 2 3 3-9 23q-3 2-2-3z" fill="#d98b35" stroke="#8b5319" /><path d="m27 1 5 1-1 5-4 3z" fill="#c89b69" /></svg>
);
const ChromeIcon = () => (
  <svg width="30" height="30" viewBox="0 0 30 30"><circle cx="15" cy="15" r="14.500" fill="#fcc934" /><path d="M2.400 7.700A14.500 14.500 0 0 1 27.600 7.700H15L8.500 18.500z" fill="#ea4335" /><path d="M2.400 7.700A14.500 14.500 0 0 0 15 29.500l6-10.500-12.500-.5z" fill="#1fa153" /><circle cx="15" cy="15" r="6.800" fill="#fff" /><circle cx="15" cy="15" r="5.400" fill="#4285f4" /></svg>
);
const CalcIcon = () => (
  <svg width="23" height="29" viewBox="0 0 23 29"><path d="M.5.500h22v28H.5z" fill="#dce9f6" stroke="#8fb1d2" /><path d="M2.500 3.500h18v8h-18z" fill="#f9fbfd" stroke="#c29a45" /><path d="M16 5.500h2v4h-2z" fill="none" stroke="#333" /><path d="M3 15h17M3 19h17M3 23h14M3 26.500h14" stroke="#7fa3cb" strokeWidth="2.500" strokeDasharray="3 1" /><path d="M18 21h3v7h-3z" fill="#f0952c" /></svg>
);
const SnipIcon = () => (
  <svg width="32" height="32" viewBox="0 0 32 32"><ellipse cx="12" cy="15" rx="11" ry="7" fill="#e9e6e8" stroke="#c7747b" /><ellipse cx="14" cy="9" rx="11" ry="7.500" fill="#fafafa" stroke="#dd3e31" strokeWidth="2" /><path d="m6 5 15 15M13 2l5 18" stroke="#6e7884" strokeWidth="2" /><ellipse cx="25" cy="21" rx="5" ry="3" transform="rotate(35 25 21)" fill="none" stroke="#2b8ad1" strokeWidth="2.500" /><ellipse cx="18" cy="26" rx="3" ry="4.500" fill="none" stroke="#2b8ad1" strokeWidth="2.500" /></svg>
);
const ExcelIcon = () => (
  <svg width="34" height="32" viewBox="0 0 34 32"><path d="M6 2h23l-1 26H2L4 5z" fill="#fff" stroke="#3b8b36" strokeWidth="1.500" /><path d="M7 4h20l-1 14H5z" fill="#d9edc4" /><path d="M17 11 32 9l-2 21-14-1z" fill="#fff" stroke="#a8cd95" /><path d="m9 9 10 10M19 9 8 19" stroke="#1d6e28" strokeWidth="3.500" fill="none" /><path d="M23 13h3M27.500 13h3M23 18h6M6 24h4M12 24h3M19 23h3M24 23h5M18 27h4M24 27h4" stroke="#52a43c" strokeWidth="3" /></svg>
);

/* ---------- Data ---------- */

const columns: Array<[string, number | undefined]> = [
  ["A", 147], ["B", 215], ["C", 215], ["D", 216], ["E", 72], ["F", 72],
  ["G", 72], ["H", 72], ["I", 72], ["J", 72], ["K", 72], ["", undefined],
];

const topics = ["المنشورات", "المواضيع", "الخدمات", "الترويج"];
const register = "حث على التسجيل في مشروع ريادة";
const intro = "تعريف بمشروع ريادة";
const online = "التسويق الإلكتروني";
const promoTwo = "٢ منشور ترويجي/ ١ أسبوع";
const promoOne = "منشور ترويجي/ ١ أسبوع";

const weeks = [
  { title: "الأسبوع الأول\u00a0 (١- ٤)", rows: [["أسبوع/8", "يوم /5-3", "يوم/1"], [intro, intro, intro], ["استشارات مالية وإدارية", "تدريبات مالية وإدارية", "تسويق الكتروني"], [promoTwo, promoTwo, promoTwo]] },
  { title: "الأسبوع الثاني\u00a0 (٥ - ١١)", rows: [["أسبوع/12", "يوم /5-3", "يوم/1"], [register, register, register], [online, online, online], [promoTwo, promoTwo, promoTwo]] },
  { title: "الأسبوع الثالث (١٢- ١٨)", rows: [["أسبوع/12", "يوم /5-3", "يوم/1"], [register, register, register], ["خدمات استشارية إدارية", "خدمات استشارية مالية", "خدمات استشارية تسويقية"], [promoOne, promoOne, promoOne]] },
  { title: "الأسبوع الرابع (١٩- ٢٥)", rows: [["أسبوع/12", "يوم /5-3", "يوم/1"], [register, register, register], ["تدريبات إدارية متخصصة", "تدريبات مالية متخصصة", "تدريبات تسويقية متخصصة"], [promoOne, promoOne, promoOne]] },
  { title: "الأسبوع الخامس (٢٦- ٣٠)", rows: [["أسبوع/10", "يوم /5-3", "يوم/1"]] },
];

/* ---------- Parts ---------- */

function Group({ name, width, launcher, children }: { name: string; width: number; launcher?: boolean; children: React.ReactNode }) {
  return (
    <GroupBox $w={width} aria-label={name}>
      <GroupBody>{children}</GroupBody>
      <GroupFoot>
        <GroupName>{name}</GroupName>
        {launcher && <PlainButton aria-label={name}><Launcher /></PlainButton>}
      </GroupFoot>
    </GroupBox>
  );
}

function Big({ icon, lines, width }: { icon: React.ReactNode; lines: string[]; width?: number }) {
  return (
    <BigButton $w={width}>
      <BigIcon>{icon}</BigIcon>
      <BigLabel>
        <LabelLine>{lines[0]}</LabelLine>
        <LabelLine>{lines[1]}<Caret /></LabelLine>
      </BigLabel>
    </BigButton>
  );
}

function PickerField({ label, width, ltr, children }: { label: string; width: number; ltr?: boolean; children: string }) {
  return (
    <PickerBox $w={width}>
      <Picker aria-label={label} $ltr={ltr}><option>{children}</option></Picker>
      <PickerArrow><Caret /></PickerArrow>
    </PickerBox>
  );
}

function EmptyCells() {
  return <>{columns.slice(4).map((_, i) => <Cell key={i} $fill="none" $line />)}</>;
}

function Sheet() {
  let n = 3;
  return (
    <Grid>
      <colgroup>
        <col style={{ width: 28 }} />
        {columns.map(([name, w]) => <col key={name} style={{ width: w }} />)}
      </colgroup>
      <thead>
        <Row $h={20}>
          <CornerHead><svg width="18" height="14"><path d="M3 1v11h12z" fill="#e6effa" /></svg></CornerHead>
          {columns.map(([name]) => <ColumnHead key={name} scope="col">{name}</ColumnHead>)}
        </Row>
      </thead>
      <tbody>
        <Row $h={20}>
          <RowHead scope="row">1</RowHead>
          <Cell $fill="none" rowSpan={2} />
          <Cell $fill="blue" $bold rowSpan={2}>فيسبوك</Cell>
          <Cell $fill="blue" $bold rowSpan={2}>تويتر</Cell>
          <Cell $fill="blue" $bold rowSpan={2}>انستغرام</Cell>
          <EmptyCells />
        </Row>
        <Row $h={20}><RowHead scope="row">2</RowHead><EmptyCells /></Row>
        <Row $h={18}>
          <RowHead scope="row">3</RowHead>
          <Cell $fill="none" colSpan={4} />
          <Cell $fill="none" $line colSpan={8} />
        </Row>
        {weeks.map((week) => (
          <React.Fragment key={week.title}>
            <Row $h={20}>
              <RowHead scope="row">{++n}</RowHead>
              <Cell $fill="blue" />
              <Cell $fill="blue" $bold colSpan={3}>{week.title}</Cell>
              <EmptyCells />
            </Row>
            {week.rows.map((row, i) => (
              <Row $h={20} key={i}>
                <RowHead scope="row">{++n}</RowHead>
                <Cell $fill="yellow" $bold $size={12}>{topics[i]}</Cell>
                {row.map((text, j) => <Cell $fill="green" $size={i === 0 ? 14 : 13} key={j}><CellText>{text}</CellText></Cell>)}
                <EmptyCells />
              </Row>
            ))}
          </React.Fragment>
        ))}
        <Row $h={20}>
          <RowHead />
          <Cell $fill="yellow" />
          <Cell $fill="green" /><Cell $fill="green" /><Cell $fill="green" />
          <EmptyCells />
        </Row>
      </tbody>
    </Grid>
  );
}

export default function App() {
  return (
    <>
      <GlobalStyle />
      <Window dir="rtl" lang="ar">
        <TitleBar>
          <QuickAccess>
            <PlainButton aria-label="حفظ"><SaveIcon /></PlainButton>
            <PlainButton aria-label="تراجع"><UndoIcon /><Caret color="#8c9db8" /></PlainButton>
            <PlainButton aria-label="إعادة"><UndoIcon flip /><Caret color="#8c9db8" /></PlainButton>
            <PlainButton aria-label="نموذج"><FormIcon /></PlainButton>
            <svg width="18" height="14"><path d="M1.500 0v14M8.500 0v14M16.500 0v14" stroke="#dbe6f5" /></svg>
            <PlainButton aria-label="مشاركة"><TwoPeople /></PlainButton>
            <PlainButton aria-label="أدوات"><ToolsIcon /><Caret /></PlainButton>
            <PlainButton aria-label="تصميم"><DesignIcon /></PlainButton>
            <PlainButton aria-label="خصائص"><PropsIcon dim /></PlainButton>
            <PlainButton aria-label="عرض الخصائص"><PropsIcon /></PlainButton>
          </QuickAccess>
          <PlainButton aria-label="تخصيص">
            <svg width="24" height="24"><path d="M9 10.500h5" stroke="#15428b" /><path d="M8.500 13h6l-3 3z" fill="#15428b" /></svg>
          </PlainButton>
          <Title>Microsoft Excel - Ryada Content Plan</Title>
          <Spacer />
          <WindowButtons>
            <WindowButton $w={47} aria-label="إغلاق"><svg width="12" height="11"><path d="m2 1.500 8 8M10 1.500l-8 8" stroke="#4d5563" strokeWidth="4" /><path d="m2 1.500 8 8M10 1.500l-8 8" stroke="#fff" strokeWidth="2" /></svg></WindowButton>
            <WindowButton $w={27} aria-label="استعادة"><svg width="12" height="12"><path d="M.5.500h8v8h-8zM3.500 3.500h8v8h-8zM6 6h3v3H6z" fill="#fff" stroke="#4d5563" /></svg></WindowButton>
            <WindowButton $w={27} aria-label="تصغير"><svg width="12" height="10"><path d="M.5 4.500h11v4H.5z" fill="#fff" stroke="#4d5563" /></svg></WindowButton>
          </WindowButtons>
        </TitleBar>
        <OfficeButton aria-label="زر Office"><OfficeLogo /></OfficeButton>

        <TabRow>
          <Tab $active $w={100}>الصفحة الرئيسية</Tab>
          <Tab $w={54}>إدراج</Tab>
          <Tab $w={96}>تخطيط الصفحة</Tab>
          <Tab $w={48}>صيغ</Tab>
          <Tab $w={54}>بيانات</Tab>
          <Tab $w={62}>مراجعة</Tab>
          <Tab $w={52}>عرض</Tab>
          <Spacer />
          <DocumentButtons>
            <PlainButton aria-label="تعليمات"><HelpIcon /></PlainButton>
            <PlainButton aria-label="تصغير المصنف"><svg width="8" height="8"><path d="M0 6h7" stroke="#5a6f8c" strokeWidth="2" /></svg></PlainButton>
            <PlainButton aria-label="استعادة المصنف"><svg width="9" height="8"><path d="M2 .5h6.500v5M.5 2.500h6v5h-6z" stroke="#5a6f8c" fill="none" /></svg></PlainButton>
            <PlainButton aria-label="إغلاق المصنف"><svg width="9" height="8"><path d="m1 0 7 8M8 0 1 8" stroke="#5a6f8c" strokeWidth="2" /></svg></PlainButton>
          </DocumentButtons>
        </TabRow>

        <Ribbon>
          <Group name="الحافظة" width={142} launcher>
            <Big icon={<PasteIcon />} lines={["لصق", ""]} />
            <SmallColumn>
              <SmallButton><SmallIcon $w={16}><CutIcon /></SmallIcon>قص</SmallButton>
              <SmallButton><SmallIcon $w={16}><CopyIcon /></SmallIcon>نسخ</SmallButton>
              <SmallButton><SmallIcon $w={16}><PainterIcon /></SmallIcon>نسخ التنسيق</SmallButton>
            </SmallColumn>
            <Spacer />
          </Group>

          <Group name="خط" width={196} launcher>
            <ControlRows>
              <ControlRow>
                <PickerField label="الخط" width={96} ltr>Arial</PickerField>
                <PickerField label="حجم الخط" width={42}>١١</PickerField>
                <ToolSet>
                  <Tool $w={22} $tight aria-label="تكبير الخط"><Glyph>A</Glyph><SizeMark up /></Tool>
                  <Tool $w={21} $tight aria-label="تصغير الخط"><Glyph $small>A</Glyph><SizeMark /></Tool>
                </ToolSet>
              </ControlRow>
              <ControlRow>
                <ToolSet>
                  <Tool $w={22} $on aria-label="غامق"><Glyph>B</Glyph></Tool>
                  <Tool $w={24} aria-label="مائل"><Glyph $italic>I</Glyph></Tool>
                  <Tool $w={32} aria-label="تسطير"><Glyph $under>U</Glyph><Caret /></Tool>
                </ToolSet>
                <ToolSet><Tool $w={32} aria-label="حدود"><BorderIcon /><Caret /></Tool></ToolSet>
                <ToolSet>
                  <Tool $w={32} aria-label="لون التعبئة"><FillIcon /><Caret /></Tool>
                  <Tool $w={32} aria-label="لون الخط"><FontColorIcon /><Caret /></Tool>
                </ToolSet>
              </ControlRow>
            </ControlRows>
          </Group>

          <Group name="محاذاة" width={252} launcher>
            <ControlRows $w={145}>
              <ControlRow>
                <ToolSet>
                  <Tool $w={22} $on aria-label="أسفل"><Lines rows={[[0, 6, 14], [2, 9, 10], [0, 12, 14]]} /></Tool>
                  <Tool $w={23} aria-label="وسط"><Lines rows={[[0, 3, 14], [2, 6, 10], [0, 9, 14]]} /></Tool>
                  <Tool $w={22} aria-label="أعلى"><Lines rows={[[0, 0, 14], [2, 3, 10], [0, 6, 14]]} /></Tool>
                </ToolSet>
                <ToolSet><Tool $w={30} aria-label="اتجاه"><OrientIcon /><Caret /></Tool></ToolSet>
                <ToolSet><Tool $w={33} aria-label="اتجاه النص"><DirectionIcon /><Caret /></Tool></ToolSet>
              </ControlRow>
              <ControlRow>
                <ToolSet>
                  <Tool $w={22} aria-label="يسار"><Lines rows={[[0, 1, 14], [0, 4, 9], [0, 7, 14], [0, 10, 9], [0, 13, 14]]} /></Tool>
                  <Tool $w={23} $on aria-label="توسيط"><Lines rows={[[0, 1, 14], [2, 4, 10], [0, 7, 14], [2, 10, 10], [0, 13, 14]]} /></Tool>
                  <Tool $w={22} aria-label="يمين"><Lines rows={[[0, 1, 14], [5, 4, 9], [0, 7, 14], [5, 10, 9], [0, 13, 14]]} /></Tool>
                </ToolSet>
                <ToolSet>
                  <Tool $w={21} aria-label="إنقاص"><IndentIcon /></Tool>
                  <Tool $w={21} aria-label="زيادة"><IndentIcon out /></Tool>
                </ToolSet>
              </ControlRow>
            </ControlRows>
            <Divider />
            <ControlRows>
              <ControlRow><SmallButton><WrapIcon />التفاف النص</SmallButton></ControlRow>
              <ControlRow><MergeButton><MergeIcon />دمج وتوسيط<Caret /></MergeButton></ControlRow>
            </ControlRows>
          </Group>

          <Group name="رقم" width={136} launcher>
            <ControlRows>
              <ControlRow><PickerField label="تنسيق الأرقام" width={128}>عام</PickerField></ControlRow>
              <ControlRow>
                <ToolSet>
                  <Tool $w={33} aria-label="عملة"><MoneyIcon /><Caret /></Tool>
                  <Tool $w={24}>%</Tool>
                  <Tool $w={21} aria-label="فاصلة"><Glyph>,</Glyph></Tool>
                </ToolSet>
                <ToolSet>
                  <Tool $w={21}><DecimalBox><DecimalLine><Arrow />.0</DecimalLine><DecimalLine><span />.00</DecimalLine></DecimalBox></Tool>
                  <Tool $w={21}><DecimalBox><DecimalLine>.00</DecimalLine><DecimalLine><Arrow right />.0</DecimalLine></DecimalBox></Tool>
                </ToolSet>
              </ControlRow>
            </ControlRows>
          </Group>

          <Group name="أنماط" width={142}>
            <Big width={48} icon={<CondIcon />} lines={["تنسيق", "شرطي"]} />
            <Big width={44} icon={<TableBrush />} lines={["التنسيق", "كجدول"]} />
            <Big width={42} icon={<TableBrush full />} lines={["أنماط", "الخلايا"]} />
          </Group>

          <Group name="خلايا" width={134}>
            <Big width={42} icon={<InsertIcon />} lines={["إدراج", ""]} />
            <Big width={42} icon={<DeleteIcon />} lines={["حذف", ""]} />
            <Big width={42} icon={<FormatIcon />} lines={["تنسيق", ""]} />
          </Group>

          <Group name="تحرير" width={186}>
            <SmallColumn>
              <SmallButton><SmallIcon $w={14}><SumIcon /></SmallIcon>جمع تلقائي<Caret /></SmallButton>
              <SmallButton><SmallIcon $w={14}><FillDownIcon /></SmallIcon>تعبئة<Caret /></SmallButton>
              <SmallButton><SmallIcon $w={14}><EraserIcon /></SmallIcon>مسح<Caret /></SmallButton>
            </SmallColumn>
            <Spacer />
            <Big width={46} icon={<SortIcon />} lines={["فرز", "وتصفية"]} />
            <Big width={46} icon={<FindIcon />} lines={["بحث", "وتحديد"]} />
          </Group>
        </Ribbon>

        <FormulaBar>
          <ExpandButton aria-label="توسيع"><svg width="8" height="9"><path d="m1 0 3 3 3-3M1 5l3 3 3-3" stroke="#111" strokeWidth="1.500" fill="none" /></svg></ExpandButton>
          <FormulaInput aria-label="الصيغة" defaultValue="الأسبوع الثالث (١٢- ١٨)" />
          <FxArea>
            <FxButton>fx</FxButton>
            <svg width="8" height="8"><circle cx="4" cy="4" r="3.500" fill="#dfe6f0" stroke="#93a9c8" /></svg>
          </FxArea>
          <NameBox>
            <svg width="9" height="5"><path d="M0 0h8L4 4.500z" fill="#000" /></svg>
            <NameInput aria-label="مربع الاسم" defaultValue="A14" />
          </NameBox>
        </FormulaBar>

        <SheetArea>
          <SheetView>
            <Sheet />
            <Block $right={231} $top={104} $w={566} $h={71} />
            <Block $right={195} $top={200} $w={611} $h={80} />
            <Block $right={188} $top={301} $w={609} $h={84}><BlockLine /></Block>
            <Block $right={187} $top={404} $w={608} $h={76} />
          </SheetView>
          <VScroll>
            <SplitBox />
            <svg width="12" height="18"><path d="M1 13h10L6 8z" fill="#2c4a77" /></svg>
            <VThumb><Grip turn /></VThumb>
            <svg width="12" height="6"><path d="M1 0h10L6 5z" fill="#2c4a77" /></svg>
          </VScroll>
        </SheetArea>

        <BottomBar>
          <TabNav>
            <PlainButton aria-label="الأول"><NavIcon end /></PlainButton>
            <PlainButton aria-label="السابق"><NavIcon /></PlainButton>
            <PlainButton aria-label="التالي"><NavIcon flip /></PlainButton>
            <PlainButton aria-label="الأخير"><NavIcon flip end /></PlainButton>
          </TabNav>
          <SheetTab $w={122}>المحتوى السنوي</SheetTab>
          <SheetTab $w={72} $active>سبتمبر</SheetTab>
          <SheetTab $w={136}>المحتوى الأسبوعي</SheetTab>
          <SheetTab $w={118}>المحتوى اليومي</SheetTab>
          <NewSheetTab $w={42} aria-label="إدراج ورقة"><svg width="15" height="13"><path d="M5 3h9v6l-3 3H5z" fill="#fff" stroke="#5b76a5" /><path d="M4 0v8M0 4h8M1 1l6 6M7 1 1 7" stroke="#e79a21" /></svg></NewSheetTab>
          <Spacer />
          <HScroll>
            <SplitBox $vertical />
            <svg width="16" height="9"><path d="M5 0v9l5-4.500z" fill="#2c4a77" /></svg>
            <HThumb><Grip /></HThumb>
            <svg width="16" height="9"><path d="M10 0v9L5 4.500z" fill="#2c4a77" /></svg>
            <SplitBox $vertical />
          </HScroll>
        </BottomBar>

        <StatusBar>
          <StatusText>جاهز</StatusText>
          <Spacer />
          <ZoomArea>
            <PlainButton aria-label="تكبير"><ZoomIcon plus /></PlainButton>
            <ZoomSlider id="zoom" type="range" min="0" max="100" defaultValue="50" />
            <PlainButton aria-label="تصغير"><ZoomIcon /></PlainButton>
            <ZoomLabel htmlFor="zoom">%١٠٠</ZoomLabel>
            <ViewSet>
              <ViewTool $w={19} aria-label="فواصل الصفحات"><svg width="13" height="11"><path d="M.5.500h12v10H.5z" fill="#8e8e8e" stroke="#555" /><path d="M1 1h3v6H1zM5 1h4v6H5z" fill="#fff" /></svg></ViewTool>
              <ViewTool $w={18} aria-label="تخطيط"><svg width="13" height="11"><path d="M.5.500h12v10H.5z" fill="#aaa" stroke="#555" /><path d="M3.500 1.500h6v8h-6z" fill="#fff" stroke="#555" /><path d="M5 4.500h3M5 6.500h3" stroke="#555" /></svg></ViewTool>
              <ViewTool $w={19} $on aria-label="عادي"><svg width="13" height="11"><path d="M.5.500h12v10H.5zM.5 4h12M.5 7.500h12M4.500.500v10M8.500.500v10" fill="#fff" stroke="#666" /></svg></ViewTool>
            </ViewSet>
          </ZoomArea>
        </StatusBar>

        <Taskbar>
          <TaskItem $w={42} $gap={11} aria-label="ابدأ"><StartOrb /></TaskItem>
          <TaskItem $w={60} $open aria-label="تنزيل"><GlobeIcon /></TaskItem>
          <TaskItem $w={60} $open aria-label="ملاحظات"><NotesIcon /></TaskItem>
          <TaskItem $w={60} $open $gap={5} aria-label="مستكشف"><FolderIcon /></TaskItem>
          <TaskItem $w={56} $gap={6} aria-label="قارئ"><ReaderIcon /></TaskItem>
          <TaskItem $w={56} $gap={3} aria-label="رسام"><PaintIcon /></TaskItem>
          <TaskItem $w={56} $open $gap={10} aria-label="Chrome"><ChromeIcon /></TaskItem>
          <TaskItem $w={56} $gap={5} aria-label="حاسبة"><CalcIcon /></TaskItem>
          <TaskItem $w={56} $gap={4} aria-label="قص"><SnipIcon /></TaskItem>
          <TaskItem $w={60} $open aria-label="Excel"><ExcelIcon /></TaskItem>
          <Spacer />
          <Tray>
            <ShowDesktop aria-label="سطح المكتب" />
            <Clock>٠٣:٤٥ م<br />٢٠/١٠/٠٩</Clock>
            <TrayIcons>
              <svg width="16" height="16"><path d="M1.500 0v15" stroke="#fff" strokeWidth="2" /><path d="M3 1h5l1 2h6v6H3z" fill="#fff" /><circle cx="11" cy="10.500" r="4.500" fill="#e0452c" /><path d="m9 8.500 4 4M13 8.500l-4 4" stroke="#fff" strokeWidth="1.500" /></svg>
              <svg width="16" height="12"><path d="M1 9h2v3H1zM4 7h2v5H4zM7 5h2v7H7zM10 3h2v9h-2zM13 0h2v12h-2z" fill="#fff" /></svg>
              <svg width="12" height="15"><path d="M2 2.500h7v11H2z" fill="#33486e" stroke="#fff" strokeWidth="2" /><path d="M4 0h3v2H4zM3.500 7h4v5h-4z" fill="#fff" /></svg>
              <svg width="16" height="15"><path d="M1 5h3l4-4v13l-4-4H1z" fill="#fff" /><path d="M10 5q2 2.500 0 5M12 3q4 4.500 0 9" stroke="#fff" fill="none" /></svg>
              <svg width="18" height="6"><path d="M6 5h8l-4-4z" fill="#fff" /></svg>
            </TrayIcons>
            <Language lang="en">EN</Language>
          </Tray>
        </Taskbar>

        <Watermark aria-hidden="true">
          <WatermarkName>مستقل</WatermarkName>
          mostaql.com
        </Watermark>
      </Window>
    </>
  );
}
